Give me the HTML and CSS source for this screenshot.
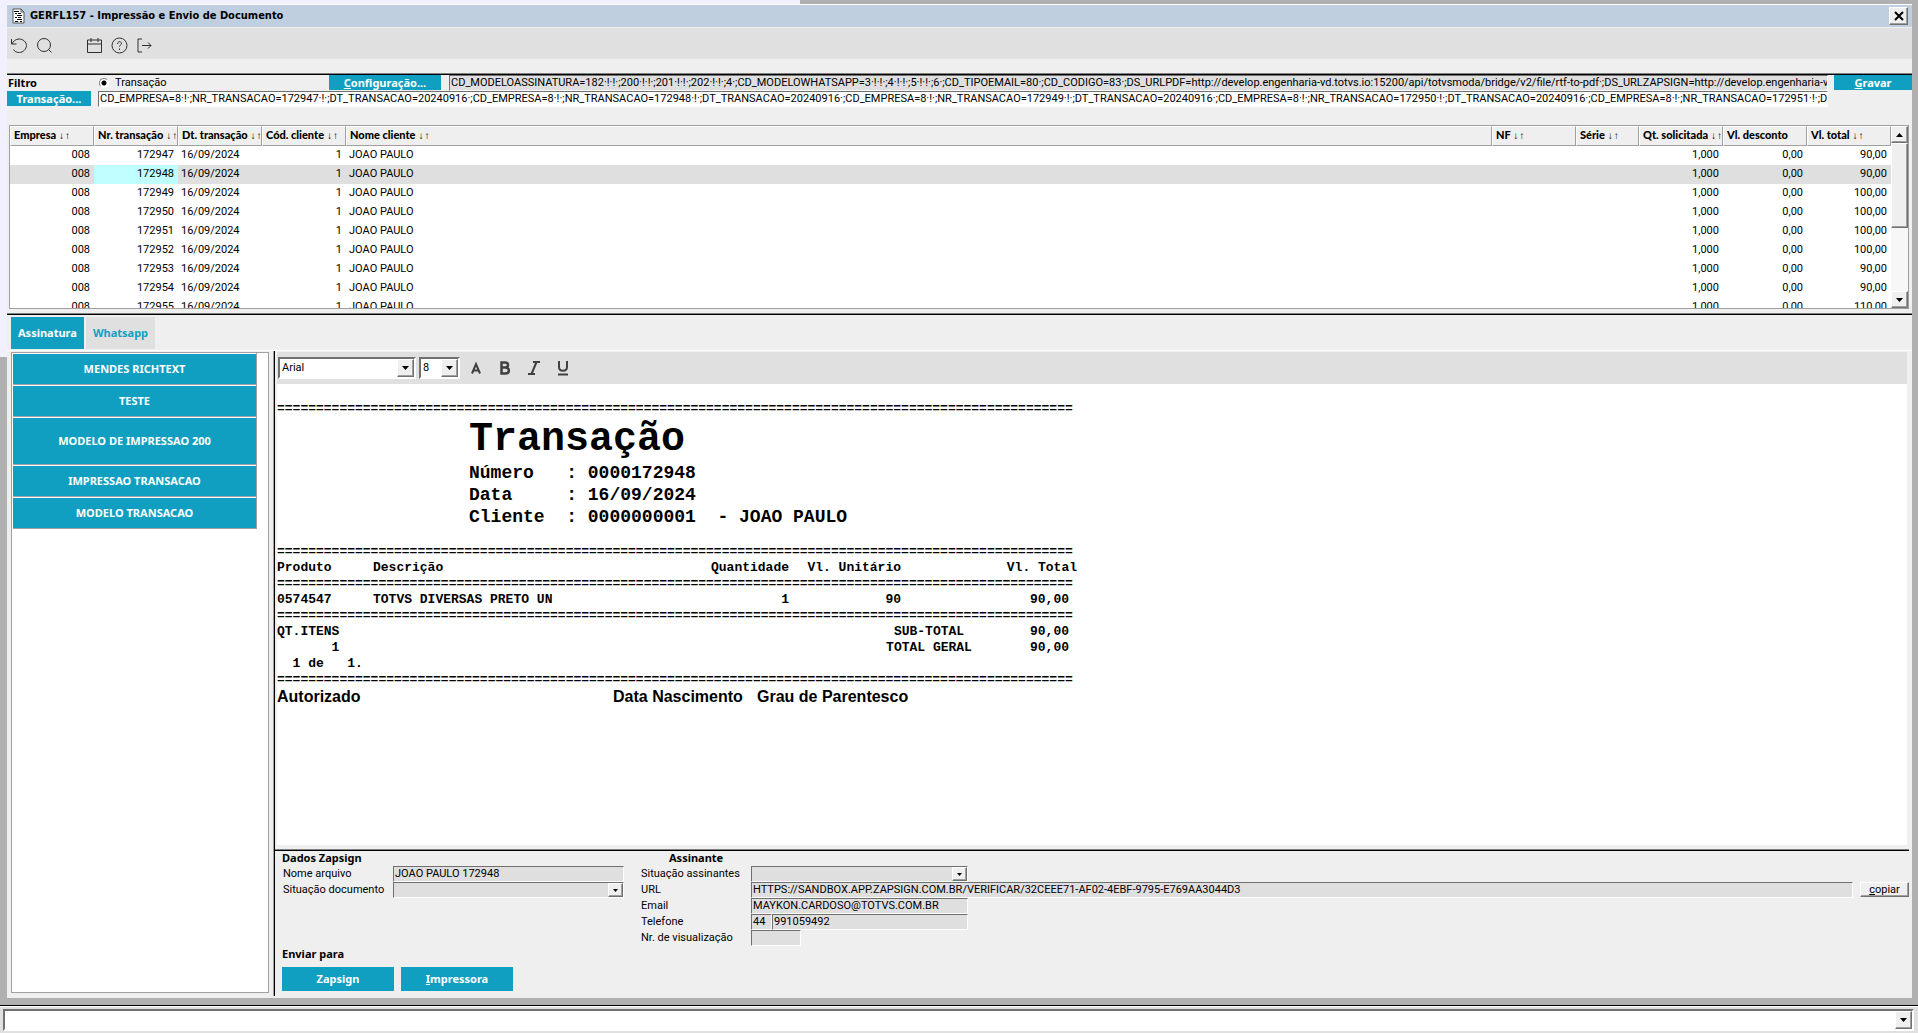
FILE: index.html
```html
<!DOCTYPE html>
<html lang="pt-BR">
<head>
    <title>GERFL157 - Impressão e Envio de Documento</title>
    <meta charset="utf-8"/>
    <link rel="stylesheet" href="styles.css">
</head>
<body>
<svg class="symbols" width="0" height="0" aria-hidden="true">
    <symbol id="down" viewBox="0 0 7 4"><path d="M0 0h7L3.500 4z"/></symbol>
    <symbol id="up" viewBox="0 0 7 4"><path d="M0 4h7L3.500 0z"/></symbol>
</svg>
<div class="desktop">
    <div class="window">
        <header class="titlebar">
            <svg class="app-icon" width="13" height="16" viewBox="0 0 13 16">
                <path d="M1 1h8l3 3v11H1z" fill="#fff" stroke="#555"/>
                <path d="M9 1v3h3" fill="none" stroke="#555"/>
                <path d="M2 3.500h5M3 5.500h2M6 5.500h3M5 7.500h5M3 9.500h2M6 9.500h3M5 11.500h5M3 13.500h3M8 13.500h2" stroke="#000"/>
            </svg>
            <h1>GERFL157 - Impressão e Envio de Documento</h1>
            <button class="raised close" aria-label="Fechar">
                <svg width="10" height="10" viewBox="0 0 10 10"><path d="M1 1l8 8M9 1l-8 8" stroke="#000" stroke-width="2"/></svg>
            </button>
        </header>
        <div class="toolbar">
            <button aria-label="Desfazer">
                <svg viewBox="0 0 17 17"><path d="M.5 2v5h5M1 7c1-3 4-5 7-5 4 0 7.500 3 7.500 6.500S12 15.500 8.500 15.500c-3 0-5-1-6-3"/></svg>
            </button>
            <button aria-label="Consultar">
                <svg viewBox="0 0 17 17"><circle cx="8" cy="8" r="6.500"/><path d="M12.500 12.500l3 3"/></svg>
            </button>
            <button class="spaced" aria-label="Calendário">
                <svg viewBox="0 0 17 17"><path d="M1.500 3h14v12.500h-14zM1.500 7h14M5 1v4M12 1v4"/></svg>
            </button>
            <button aria-label="Ajuda">
                <svg viewBox="0 0 17 17"><circle cx="8.500" cy="8.500" r="7.500"/><path d="M6.500 7c0-3 4-3 4-.5 0 1.500-2 1.500-2 3M8.500 11.500v1.500"/></svg>
            </button>
            <button aria-label="Sair">
                <svg viewBox="0 0 17 17"><path d="M6 2H2v13h4M6 8.500h9M12 5.500l3 3-3 3"/></svg>
            </button>
        </div>

        <section class="filter">
            <div class="filter-row">
                <strong class="filter-title">Filtro</strong>
                <label class="radio"><input type="radio" name="filtro" checked> Transação</label>
                <button class="action config"><u>C</u>onfiguração...</button>
                <input class="sunken readonly" aria-label="Configuração" readonly value="CD_MODELOASSINATURA=182·!·!·;200·!·!·;201·!·!·;202·!·!·;4·;CD_MODELOWHATSAPP=3·!·!·;4·!·!·;5·!·!·;6·;CD_TIPOEMAIL=80·;CD_CODIGO=83·;DS_URLPDF=http://develop.engenharia-vd.totvs.io:15200/api/totvsmoda/bridge/v2/file/rtf-to-pdf·;DS_URLZAPSIGN=http://develop.engenharia-vd.totvs.io:15200/api/totvsmoda">
                <button class="action save"><u>G</u>ravar</button>
            </div>
            <div class="filter-row">
                <button class="action transaction">Transação...</button>
                <input class="sunken" aria-label="Transação" value="CD_EMPRESA=8·!·;NR_TRANSACAO=172947·!·;DT_TRANSACAO=20240916·;CD_EMPRESA=8·!·;NR_TRANSACAO=172948·!·;DT_TRANSACAO=20240916·;CD_EMPRESA=8·!·;NR_TRANSACAO=172949·!·;DT_TRANSACAO=20240916·;CD_EMPRESA=8·!·;NR_TRANSACAO=172950·!·;DT_TRANSACAO=20240916·;CD_EMPRESA=8·!·;NR_TRANSACAO=172951·!·;DT_TRANSACAO=20240916">
            </div>
        </section>

        <div class="grid-box">
            <div class="grid-view">
                <table class="grid">
                    <colgroup>
                        <col class="c-md"><col class="c-md"><col class="c-md"><col class="c-md"><col>
                        <col class="c-md"><col class="c-sm"><col class="c-md"><col class="c-md"><col class="c-md">
                    </colgroup>
                    <thead>
                    <tr>
                        <th>Empresa <i>↓↑</i></th>
                        <th>Nr. transação <i>↓↑</i></th>
                        <th>Dt. transação <i>↓↑</i></th>
                        <th>Cód. cliente <i>↓↑</i></th>
                        <th>Nome cliente <i>↓↑</i></th>
                        <th>NF <i>↓↑</i></th>
                        <th>Série <i>↓↑</i></th>
                        <th>Qt. solicitada <i>↓↑</i></th>
                        <th>Vl. desconto</th>
                        <th>Vl. total <i>↓↑</i></th>
                    </tr>
                    </thead>
                    <tbody>
                    <tr><td class="num">008</td><td class="num">172947</td><td>16/09/2024</td><td class="num">1</td><td>JOAO PAULO</td><td></td><td></td><td class="num">1,000</td><td class="num">0,00</td><td class="num">90,00</td></tr>
                    <tr class="selected"><td class="num">008</td><td class="num current">172948</td><td>16/09/2024</td><td class="num">1</td><td>JOAO PAULO</td><td></td><td></td><td class="num">1,000</td><td class="num">0,00</td><td class="num">90,00</td></tr>
                    <tr><td class="num">008</td><td class="num">172949</td><td>16/09/2024</td><td class="num">1</td><td>JOAO PAULO</td><td></td><td></td><td class="num">1,000</td><td class="num">0,00</td><td class="num">100,00</td></tr>
                    <tr><td class="num">008</td><td class="num">172950</td><td>16/09/2024</td><td class="num">1</td><td>JOAO PAULO</td><td></td><td></td><td class="num">1,000</td><td class="num">0,00</td><td class="num">100,00</td></tr>
                    <tr><td class="num">008</td><td class="num">172951</td><td>16/09/2024</td><td class="num">1</td><td>JOAO PAULO</td><td></td><td></td><td class="num">1,000</td><td class="num">0,00</td><td class="num">100,00</td></tr>
                    <tr><td class="num">008</td><td class="num">172952</td><td>16/09/2024</td><td class="num">1</td><td>JOAO PAULO</td><td></td><td></td><td class="num">1,000</td><td class="num">0,00</td><td class="num">100,00</td></tr>
                    <tr><td class="num">008</td><td class="num">172953</td><td>16/09/2024</td><td class="num">1</td><td>JOAO PAULO</td><td></td><td></td><td class="num">1,000</td><td class="num">0,00</td><td class="num">90,00</td></tr>
                    <tr><td class="num">008</td><td class="num">172954</td><td>16/09/2024</td><td class="num">1</td><td>JOAO PAULO</td><td></td><td></td><td class="num">1,000</td><td class="num">0,00</td><td class="num">90,00</td></tr>
                    <tr><td class="num">008</td><td class="num">172955</td><td>16/09/2024</td><td class="num">1</td><td>JOAO PAULO</td><td></td><td></td><td class="num">1,000</td><td class="num">0,00</td><td class="num">110,00</td></tr>
                    </tbody>
                </table>
            </div>
            <div class="scrollbar">
                <button class="raised" aria-label="Subir"><svg width="7" height="4"><use href="#up"/></svg></button>
                <div class="raised thumb"></div>
                <button class="raised" aria-label="Descer"><svg width="7" height="4"><use href="#down"/></svg></button>
            </div>
        </div>

        <nav class="tabs">
            <button class="tab active">Assinatura</button>
            <button class="tab">Whatsapp</button>
        </nav>

        <main class="work">
            <aside class="models">
                <div class="model-list">
                    <button>MENDES RICHTEXT</button>
                    <button>TESTE</button>
                    <button class="tall">MODELO DE IMPRESSAO 200</button>
                    <button>IMPRESSAO TRANSACAO</button>
                    <button>MODELO TRANSACAO</button>
                </div>
            </aside>
            <section class="editor">
                <div class="format-bar">
                    <div class="sunken combo font-name">
                        <select aria-label="Fonte"><option>Arial</option></select>
                        <span class="raised arrow"><svg width="7" height="4"><use href="#down"/></svg></span>
                    </div>
                    <div class="sunken combo font-size">
                        <select aria-label="Tamanho"><option>8</option></select>
                        <span class="raised arrow"><svg width="7" height="4"><use href="#down"/></svg></span>
                    </div>
                    <button aria-label="Cor"><svg viewBox="0 0 14 16"><path d="M3 13.500L7 4l4 9.500M4.500 10.500h5" stroke-width="2"/></svg></button>
                    <button aria-label="Negrito"><svg viewBox="0 0 14 16"><path d="M3.500 2.500h3.500c4 0 4 5 0 5H3.500zM3.500 7.500h4c4.500 0 4.500 6 0 6h-4z" stroke-width="2.500"/></svg></button>
                    <button aria-label="Itálico"><svg viewBox="0 0 14 16"><path d="M6 2h7M1 14h7M9.500 2l-5 12" stroke-width="2"/></svg></button>
                    <button aria-label="Sublinhado"><svg viewBox="0 0 14 16"><path d="M3 1v6c0 5 8 5 8 0V1M2 14.500h10" stroke-width="2"/></svg></button>
                </div>
                <article class="document">
                    <div class="rule">======================================================================================================</div>
                    <h2>Transação</h2>
<pre>Número   : 0000172948
Data     : 16/09/2024
Cliente  : 0000000001  - JOAO PAULO</pre>
                    <table class="receipt">
                        <colgroup>
                            <col class="r-96"><col class="r-320"><col class="r-96"><col class="r-80"><col class="r-32"><col class="r-88"><col class="r-88">
                        </colgroup>
                        <tr><td colspan="7" class="rule">======================================================================================================</td></tr>
                        <tr><th>Produto</th><th>Descrição</th><th class="num">Quantidade</th><th class="num" colspan="2">Vl. Unitário</th><th class="num" colspan="2">Vl. Total</th></tr>
                        <tr><td colspan="7" class="rule">======================================================================================================</td></tr>
                        <tr><td>0574547</td><td>TOTVS DIVERSAS PRETO UN</td><td class="num">1</td><td class="num" colspan="2">90</td><td class="num total" colspan="2">90,00</td></tr>
                        <tr><td colspan="7" class="rule">======================================================================================================</td></tr>
                        <tr><td colspan="4">QT.ITENS</td><td class="sum" colspan="2">SUB-TOTAL</td><td class="num total">90,00</td></tr>
                        <tr><td colspan="4">       1</td><td class="sum" colspan="2">TOTAL GERAL</td><td class="num total">90,00</td></tr>
                        <tr><td colspan="7">  1 de   1.</td></tr>
                        <tr><td colspan="7" class="rule">======================================================================================================</td></tr>
                    </table>
                    <p class="signature"><span>Autorizado</span><span>Data Nascimento</span><span>Grau de Parentesco</span></p>
                </article>
                <form class="details">
                    <div class="column">
                        <strong>Dados Zapsign</strong>
                        <div class="field"><label for="arquivo">Nome arquivo</label><input id="arquivo" class="sunken readonly" readonly value="JOAO PAULO 172948"></div>
                        <div class="field">
                            <label for="documento">Situação documento</label>
                            <div class="sunken combo readonly">
                                <select id="documento"><option></option></select>
                                <span class="raised arrow"><svg width="5" height="3"><use href="#down"/></svg></span>
                            </div>
                        </div>
                        <strong class="send-title">Enviar para</strong>
                        <div class="send">
                            <button type="button" class="action">Zapsign</button>
                            <button type="button" class="action"><u>I</u>mpressora</button>
                        </div>
                    </div>
                    <div class="column signer">
                        <strong class="signer-title">Assinante</strong>
                        <div class="field">
                            <label for="assinantes">Situação assinantes</label>
                            <div class="sunken combo readonly medium">
                                <select id="assinantes"><option></option></select>
                                <span class="raised arrow"><svg width="5" height="3"><use href="#down"/></svg></span>
                            </div>
                        </div>
                        <div class="field">
                            <label for="url">URL</label>
                            <input id="url" class="sunken readonly" readonly value="HTTPS://SANDBOX.APP.ZAPSIGN.COM.BR/VERIFICAR/32CEEE71-AF02-4EBF-9795-E769AA3044D3">
                            <button type="button" class="raised copy"><u>c</u>opiar</button>
                        </div>
                        <div class="field"><label for="email">Email</label><input id="email" class="sunken readonly medium" readonly value="MAYKON.CARDOSO@TOTVS.COM.BR"></div>
                        <div class="field">
                            <label for="ddd">Telefone</label>
                            <div class="phone medium">
                                <input id="ddd" class="sunken readonly ddd" readonly value="44">
                                <input class="sunken readonly" aria-label="Número de telefone" readonly value="991059492">
                            </div>
                        </div>
                        <div class="field"><label for="views">Nr. de visualização</label><input id="views" class="sunken readonly short" readonly></div>
                    </div>
                </form>
            </section>
        </main>
    </div>
</div>
<footer class="command">
    <div class="sunken combo">
        <select aria-label="Comando"><option></option></select>
        <span class="raised arrow"><svg width="7" height="4"><use href="#down"/></svg></span>
    </div>
</footer>
</body>
</html>
```
FILE: styles.css
```css
* {
    box-sizing: border-box;
}

body {
    margin: 0;
    height: 100vh;
    display: flex;
    flex-direction: column;
    font-family: Roboto, "Liberation Sans", sans-serif;
    font-size: 11px;
    line-height: 16px;
    color: #000;
    background-color: #e0e0e0;
}

button, input, select {
    font: inherit;
    color: inherit;
    margin: 0;
    padding: 0;
    border: none;
    border-radius: 0;
    background: none;
    outline: none;
}

button {
    display: flex;
    align-items: center;
    justify-content: center;
}

strong, .action, .tab, .model-list button {
    font-family: "Noto Sans", "Open Sans", sans-serif;
    font-weight: bold;
}

.symbols {
    display: block;
    height: 0;
}

.sunken {
    border: 2px solid;
    border-color: #707070 #fff #fff #707070;
    background-color: #fff;
    min-width: 0;
}

.raised {
    border: 1px solid;
    border-color: #fff #707070 #707070 #fff;
    box-shadow: inset -1px -1px 0 #a0a0a0;
    background-color: #efefef;
}

.readonly {
    border-width: 1px;
    background-color: #dfdfdf;
}

.action {
    height: 15px;
    color: #fff;
    background-color: #109fc0;
}

/* window frame */
.desktop {
    flex: 1;
    min-height: 0;
    display: flex;
    padding: 4px 6px 7px 7px;
    border-bottom: 1px solid #000;
    background: linear-gradient(#f0f0ff, #f0f0ff) 0 0 / 7px 357px no-repeat,
        linear-gradient(#f0f0ff, #f0f0ff) 0 0 / 800px 4px no-repeat,
        #b0b0b0;
}

.window {
    flex: 1;
    min-width: 0;
    display: flex;
    flex-direction: column;
    border-top: 1px solid #fff;
    background-color: #efefef;
}

.titlebar {
    height: 23px;
    display: flex;
    align-items: center;
    gap: 5px;
    padding: 0 4px 0 5px;
    border-bottom: 1px solid #efefef;
    background-color: #bfcfe0;
}

.titlebar h1 {
    flex: 1;
    margin: 0;
    font-family: "DejaVu Sans Condensed", "DejaVu Sans", sans-serif;
    font-size: 11px;
}

.close {
    width: 19px;
    height: 18px;
}

.toolbar {
    height: 31px;
    display: flex;
    align-items: center;
    gap: 8px;
    padding: 3px 3px 0 4px;
    background-color: #e0e0e0;
}

.toolbar svg {
    display: block;
    width: 17px;
    height: 17px;
    fill: none;
    stroke: #303030;
}

.toolbar .spaced {
    margin-left: 25px;
}

/* filter */
.filter {
    margin-top: 15px;
    border-top: 1px solid #000;
    box-shadow: 0 -1px 0 #808080;
}

.filter-row {
    height: 16px;
    display: flex;
}

.filter-row .sunken {
    flex: 1;
    height: 16px;
    padding-left: 1px;
    border-width: 1px;
}

.filter-title {
    width: 92px;
    padding-left: 1px;
}

.radio {
    width: 230px;
    display: flex;
    align-items: center;
    gap: 6px;
}

.radio input {
    appearance: none;
    width: 10px;
    height: 10px;
    border: 1px solid;
    border-color: #808080 #fff #fff #808080;
    border-radius: 50%;
    background: radial-gradient(circle, #000 2px, #fff 3px);
}

.config {
    width: 112px;
    margin-right: 8px;
}

.save {
    width: 78px;
    margin-left: 6px;
}

.transaction {
    width: 84px;
    margin-right: 7px;
}

.filter-row:last-child .sunken {
    margin-right: 84px;
}

/* transactions */
.grid-box {
    height: 184px;
    display: flex;
    margin: 18px 3px 0 2px;
    border: 1px solid #a0a0a0;
    background-color: #fff;
}

.grid-view {
    flex: 1;
    min-width: 0;
    overflow: hidden;
}

.grid {
    width: 100%;
    table-layout: fixed;
    border-collapse: separate;
    border-spacing: 0;
}

.c-md {
    width: 84px;
}

.c-sm {
    width: 63px;
}

.grid th {
    height: 20px;
    padding: 0 0 2px 3px;
    overflow: hidden;
    font-family: Lato, "Open Sans", sans-serif;
    font-weight: 900;
    text-align: left;
    white-space: nowrap;
    border: 1px solid;
    border-color: #fff #a0a0a0 #a0a0a0 #fff;
    background-color: #efefef;
}

.grid th i {
    font: bold 10px "Liberation Mono", monospace;
}

.grid td {
    height: 19px;
    padding: 0 4px 2px 3px;
    overflow: hidden;
    white-space: nowrap;
}

.num {
    text-align: right;
}

.selected {
    background-color: #dfdfdf;
}

.current {
    background-color: #bfffff;
}

.scrollbar {
    width: 17px;
    display: flex;
    flex-direction: column;
    background-color: #f7f7f7;
}

.scrollbar button {
    height: 17px;
}

.thumb {
    height: 85px;
    margin-bottom: auto;
}

/* tabs */
.tabs {
    height: 37px;
    display: flex;
    gap: 2px;
    margin-top: 5px;
    padding: 2px 4px 1px;
    border-top: 1px solid #000;
    border-bottom: 1px solid #fff;
    box-shadow: 0 -1px 0 #808080;
}

.tab {
    padding: 0 7px;
    color: #109fc0;
    background-color: #e0e0e0;
}

.tab.active {
    color: #fff;
    background-color: #109fc0;
}

.work {
    flex: 1;
    min-height: 0;
    display: flex;
    padding: 0 3px 2px 4px;
}

.models {
    width: 258px;
    margin: 1px 5px 3px 0;
    padding-left: 1px;
    border: 1px solid #a0a0a0;
    background-color: #fff;
}

.model-list {
    width: 244px;
    border-right: 1px solid #a0a0a0;
}

.model-list button {
    width: 100%;
    height: 32px;
    color: #fff;
    border-top: 1px solid #fff;
    border-bottom: 1px solid #a0a0a0;
    background-color: #109fc0;
}

.model-list .tall {
    height: 48px;
}

/* document */
.editor {
    flex: 1;
    min-width: 0;
    display: flex;
    flex-direction: column;
    border-left: 1px solid #000;
    box-shadow: -1px 0 0 #a0a0a0;
}

.format-bar {
    height: 32px;
    display: flex;
    align-items: center;
    gap: 3px;
    margin: 1px 2px 0;
    padding: 0 1px;
    background-color: #e0e0e0;
}

.format-bar button {
    width: 26px;
}

.format-bar button svg {
    width: 14px;
    height: 16px;
    fill: none;
    stroke: #404040;
}

.combo {
    display: flex;
    height: 22px;
}

.combo select {
    flex: 1;
    min-width: 0;
    appearance: none;
    padding-left: 2px;
}

.arrow {
    width: 17px;
    display: flex;
    align-items: center;
    justify-content: center;
}

.font-name {
    width: 138px;
}

.font-size {
    width: 41px;
}

.document {
    flex: 1;
    min-height: 0;
    overflow: hidden;
    margin: 0 2px 5px;
    padding-top: 17px;
    font: bold 13px/16px "Liberation Mono", monospace;
    background-color: #fff;
}

.rule {
    width: 800px;
    overflow: hidden;
}

.document h2 {
    margin: 0;
    padding-left: 192px;
    font-size: 40px;
    line-height: 45px;
}

.document pre {
    margin: 0 0 16px;
    padding-left: 192px;
    font: inherit;
    font-size: 18px;
    line-height: 22px;
}

.receipt {
    width: 800px;
    table-layout: fixed;
    border-collapse: collapse;
}

.receipt th, .receipt td {
    padding: 0;
    white-space: pre;
}

.receipt th {
    text-align: left;
}

.receipt .num {
    text-align: right;
}

.receipt .total {
    padding-right: 8px;
}

.receipt .sum {
    text-align: center;
}

.r-96 {
    width: 96px;
}

.r-320 {
    width: 320px;
}

.r-80 {
    width: 80px;
}

.r-32 {
    width: 32px;
}

.r-88 {
    width: 88px;
}

.signature {
    display: grid;
    grid-template-columns: 336px 144px 1fr;
    margin: 0;
    font: bold 16px/18px "Liberation Sans", sans-serif;
}

/* details */
.details {
    height: 146px;
    display: flex;
    border-top: 1px solid #000;
    box-shadow: 0 -1px 0 #808080;
}

.details strong {
    padding-bottom: 2px;
    line-height: 13px;
}

.column {
    width: 349px;
    display: flex;
    flex-direction: column;
    padding-left: 7px;
}

.signer {
    flex: 1;
    min-width: 0;
    padding-left: 16px;
}

.signer-title {
    padding-left: 29px;
}

.field {
    height: 16px;
    display: flex;
}

.field label {
    width: 111px;
    padding-left: 1px;
}

.field .sunken {
    flex: 1;
    height: 16px;
    padding-left: 1px;
}

.field .arrow {
    width: 15px;
}

.field .medium {
    flex: none;
    width: 217px;
}

.phone {
    display: flex;
}

.field .ddd {
    flex: none;
    width: 21px;
}

.field .short {
    flex: none;
    width: 50px;
}

.copy {
    width: 49px;
    height: 15px;
    margin-left: 7px;
}

.send-title {
    margin-top: 49px;
}

.send {
    display: flex;
    gap: 7px;
    margin-top: 5px;
}

.send .action {
    width: 112px;
    height: 24px;
}

.command {
    padding: 2px 4px 2px 3px;
    border-top: 1px solid #fff;
}
```
